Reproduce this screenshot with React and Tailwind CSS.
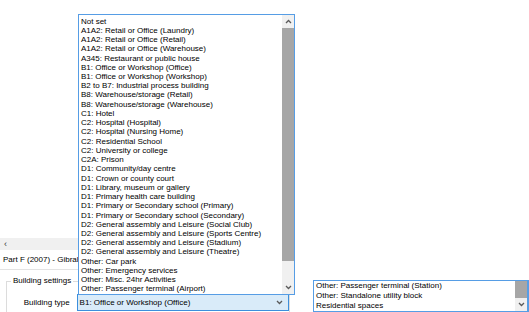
const items = [
  'Not set',
  'A1A2: Retail or Office (Laundry)',
  'A1A2: Retail or Office (Retail)',
  'A1A2: Retail or Office (Warehouse)',
  'A345: Restaurant or public house',
  'B1: Office or Workshop (Office)',
  'B1: Office or Workshop (Workshop)',
  'B2 to B7: Industrial process building',
  'B8: Warehouse/storage (Retail)',
  'B8: Warehouse/storage (Warehouse)',
  'C1: Hotel',
  'C2: Hospital (Hospital)',
  'C2: Hospital (Nursing Home)',
  'C2: Residential School',
  'C2: University or college',
  'C2A: Prison',
  'D1: Community/day centre',
  'D1: Crown or county court',
  'D1: Library, museum or gallery',
  'D1: Primary health care building',
  'D1: Primary or Secondary school (Primary)',
  'D1: Primary or Secondary school (Secondary)',
  'D2: General assembly and Leisure (Social Club)',
  'D2: General assembly and Leisure (Sports Centre)',
  'D2: General assembly and Leisure (Stadium)',
  'D2: General assembly and Leisure (Theatre)',
  'Other: Car park',
  'Other: Emergency services',
  'Other: Misc. 24hr Activities',
  'Other: Passenger terminal (Airport)',
]

const Chev = ({up}) => (
  <svg width="7" height="5" viewBox="0 0 7 5" className="block">
    <path d={up ? 'M1 4L3.5 1.5L6 4' : 'M1 1L3.5 3.5L6 1'} fill="none" stroke="#5a5a5a" strokeWidth="1.3"/>
  </svg>
)

export default function App(){
  return <div className="relative w-[529px] h-[312px] overflow-hidden bg-white text-black font-['Liberation_Sans',sans-serif] text-[8px] leading-none">
    {/* form behind the popups */}
    <div className="pt-[238px] flex flex-col">
      <div className="h-[12px] w-[290px] bg-[#f0f0f0] flex items-center pl-[4px] text-[9px] text-[#333]">‹</div>
      <div className="h-[14px] w-[78px] overflow-hidden whitespace-nowrap flex items-end pl-[3px] text-[8px]">Part F (2007) - Gibraltar</div>
      <div className="mt-[5px] h-px w-[290px] bg-[#e3e3e3]"/>
      <div className="mt-[11px] ml-[6px] w-[284px] h-[40px] border border-[#dcdcdc] relative">
        <span className="absolute -top-[5px] left-[4px] bg-white px-[2px] text-[8px]">Building settings</span>
        <div className="flex items-center mt-[12px]">
          <span className="w-[71px] text-right pr-[7px] text-[8px]">Building type</span>
          <div className="w-[217px] h-[17px] bg-[#d9ebf9] border border-[#3c8fdc] flex items-center justify-between pl-[2px] pr-[5px] text-[8px]">
            <span>B1: Office or Workshop (Office)</span>
            <Chev/>
          </div>
        </div>
      </div>
    </div>

    {/* open dropdown list */}
    <div className="absolute left-[78px] top-[14px] w-[217px] h-[281px] bg-white border border-[#569de5] flex">
      <div className="flex-1 flex flex-col pl-[2px] pt-[2px] text-[8px]">
        {items.map(t => <div key={t} className="h-[9.45px] flex items-center whitespace-nowrap">{t}</div>)}
      </div>
      <div className="w-[12px] bg-[#f0f0f0] flex flex-col items-center">
        <div className="h-[13px] flex items-center"><Chev up/></div>
        <div className="w-[12px] h-[233px] bg-[#a6a6a6]"/>
        <div className="flex-1"/>
        <div className="h-[13px] flex items-center"><Chev/></div>
      </div>
    </div>

    {/* second popup, cut off */}
    <div className="absolute left-[313px] top-[280px] w-[216px] h-[32px] bg-white border border-[#569de5] border-r-[2px] flex">
      <div className="flex-1 flex flex-col pl-[2px] text-[8px]">
        <div className="h-[10px] flex items-center">Other: Passenger terminal (Station)</div>
        <div className="h-[10px] flex items-center">Other: Standalone utility block</div>
        <div className="h-[10px] flex items-center">Residential spaces</div>
      </div>
      <div className="w-[12px] bg-[#f0f0f0] flex flex-col items-center">
        <div className="w-[12px] h-[17px] bg-[#a6a6a6]"/>
        <div className="flex-1 flex items-center"><Chev/></div>
      </div>
    </div>
  </div>
}
